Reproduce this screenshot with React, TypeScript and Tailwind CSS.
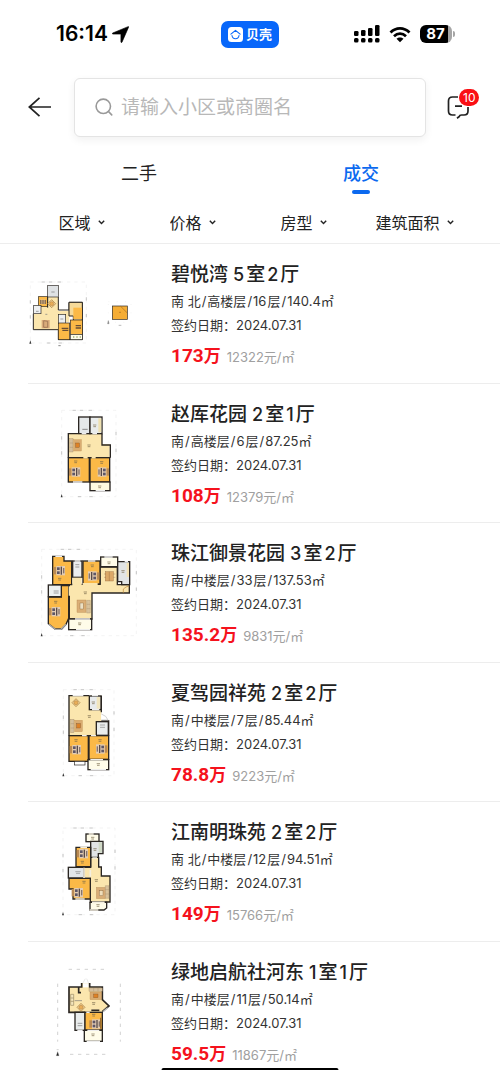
import type { ReactNode } from "react";

type Pos = { x: number; y: number };
type Box = Pos & { w: number; h: number };

const WALL = "#2a2622";
const LIVING = "#fbe6ae";
const BEDROOM = "#fbb947";

function Room({ x, y, w, h, fill, thin }: Box & { fill: string; thin?: boolean }) {
  return <rect x={x} y={y} width={w} height={h} fill={fill} stroke={WALL} strokeWidth={thin ? 2 : 4} />;
}

function Bed({ x, y, flip }: Pos & { flip?: boolean }) {
  return (
    <g transform={`translate(${x} ${y})${flip ? " translate(34 0) scale(-1 1)" : ""}`}>
      <rect x={0} y={3} width={8} height={22} fill="#b98a56" />
      <rect x={8} y={0} width={26} height={28} fill="#e3cdb4" />
      <rect x={10} y={4} width={8} height={8} fill="#5d5666" />
      <rect x={10} y={16} width={8} height={8} fill="#5d5666" />
      <rect x={21} y={2} width={4} height={24} fill="#574a4a" />
      <rect x={28} y={6} width={4} height={16} fill="#85746c" />
    </g>
  );
}

function Sofa({ x, y }: Pos) {
  return (
    <g transform={`translate(${x} ${y})`}>
      <rect width={10} height={40} fill="#d5bf9c" stroke="#9c8360" />
      <path d="M0 13h10M0 26h10" stroke="#9c8360" />
      <rect x={12} y={3} width={23} height={34} fill="#d9ac72" stroke="#b98747" />
      <rect x={18} y={13} width={11} height={13} fill="#dd8228" stroke="#78491f" />
    </g>
  );
}

function Dining({ x, y }: Pos) {
  return (
    <g transform={`translate(${x} ${y})`}>
      <path d="M13 1l12 12-12 12L1 13z" fill="#edcf96" stroke="#a87b3b" strokeWidth={2} />
      <circle cx={13} cy={13} r={6} fill="#e8ad58" stroke="#9c672f" />
    </g>
  );
}

function Mark({ x, y }: Pos) {
  return <path d={`M${x} ${y}h10M${x + 1} ${y + 5}h8`} stroke="#766748" strokeWidth={2} />;
}

/* Dimension lines around a plan, with the compass in the lower left corner */
function Rulers({ x, y, w, h }: Box) {
  return (
    <g fill="none">
      <rect x={x} y={y} width={w} height={h} stroke="#dedede" strokeWidth={1} strokeDasharray="10 12" />
      <path
        d={`M${x + w * 0.2} ${y}h10m12 0h10m16 0h10M${x + w * 0.3} ${y + h}h10m24 0h10M${x} ${y + h * 0.3}v10m0 35v10M${x + w} ${y + h * 0.25}v10m0 40v10`}
        stroke="#aaa"
        strokeWidth={2}
      />
      <path d={`M${x - 3} ${y + h + 2}l3-10 3 10z`} fill="#333" />
    </g>
  );
}

function Plan({ top, children }: { top: number; children: ReactNode }) {
  return (
    <svg viewBox={`24 ${top} 390 360`} className="mt-[9px] h-[120px] w-[130px] shrink-0" role="img" aria-label="户型图">
      {children}
    </svg>
  );
}

const planBiyue = (
  <Plan top={6}>
    <Rulers x={31} y={93} w={168} h={183} />
    <path d="M83 138h32v42h33v34H115v22H40v-48h16v-52z" fill={LIVING} />
    <Room x={83} y={103} w={32} h={35} fill="#dfe2e4" thin />
    <Room x={55} y={137} w={28} h={30} fill={BEDROOM} thin />
    <Room x={41} y={163} w={22} h={25} fill="#eef0f1" thin />
    <path d="M83 137v33M115 138v39h32v-23h40v112H115v-30H40v-48" fill="none" stroke={WALL} strokeWidth={3} />
    <path d="M147 154h40v54h-27v-13h-13z" fill="#f6da99" stroke={WALL} strokeWidth={3} />
    <rect x={160} y={170} width={26} height={34} fill={BEDROOM} />
    <Room x={115} y={190} w={22} h={28} fill="#eceff0" thin />
    <Room x={115} y={216} w={34} h={50} fill={BEDROOM} thin />
    <Room x={151} y={207} w={36} h={43} fill={BEDROOM} thin />
    <Room x={152} y={250} w={35} h={16} fill="#fffce9" thin />
    <path d="M60 147h18v12H60z" fill="#806548" />
    <path d="M64 144v16m5-16v16m5-16v16" stroke="#e3c49c" strokeWidth={2} />
    <Dining x={82} y={145} />
    <rect x={65} y={207} width={24} height={25} fill="#d9ab7a" />
    <path d="M71 209v20h12v-18z" fill="none" stroke="#8d654a" strokeWidth={2} />
    <path d="M125 232h20m-18 6h18m22-14h16m-16 7h16" stroke="#674e35" strokeWidth={4} />
    <path d="M94 123h10M48 181h8M121 204h9M76 190h6" stroke="#777" strokeWidth={2} />
    <path d="M159 258h4m6 0h4m6 0h4" stroke="#75873d" strokeWidth={3} />
    <path d="M115 284h7" stroke="#888" strokeWidth={3} />
    <rect x={265} y={152} width={68} height={62} fill="none" stroke="#ddd" strokeDasharray="3 22" />
    <Room x={277} y={165} w={45} h={40} fill="#f5ad35" thin />
    <path d="M302 166l19 19M297 184h6" fill="none" stroke="#a66b20" strokeWidth={2} />
    <path d="M263 218l2-9 2 9zM296 223h8" fill="#555" stroke="#999" strokeWidth={2} />
  </Plan>
);

const planZhaoshe = (
  <Plan top={-10}>
    <Rulers x={125} y={42} w={163} h={259} />
    <path d="M145 112h101v32h23v42H145z" fill={LIVING} />
    <Room x={176} y={62} w={34} h={50} fill="#e5e8e9" />
    <Room x={210} y={62} w={36} h={50} fill="#e9ecec" />
    <path d="M235 66h9v42h-9z" fill="#efe1b1" />
    <path d="M174 112h-29v72m101-72v34h25v38" fill="none" stroke={WALL} strokeWidth={4} />
    <Room x={145} y={184} w={63} h={73} fill={BEDROOM} />
    <Room x={210} y={184} w={59} h={73} fill={BEDROOM} />
    <Room x={210} y={257} w={60} h={26} fill="#fffbe0" />
    <path d="M185 112h14m18 0h14m-72 145h28m40 26h28" stroke="#eee" strokeWidth={4} />
    <path d="M190 184h13m12 0h12" stroke={LIVING} strokeWidth={5} />
    <Sofa x={149} y={127} />
    <Bed x={147} y={213} />
    <Bed x={233} y={213} flip />
    <Mark x={202} y={146} />
    <Mark x={162} y={194} />
    <Mark x={240} y={196} />
    <Mark x={219} y={86} />
    <Mark x={234} y={269} />
    <path d="M187 99h16" stroke="#888" strokeWidth={3} />
  </Plan>
);

const planZhujiang = (
  <Plan top={3}>
    <Rulers x={65} y={55} w={284} h={259} />
    <path d="M148 160h92V108h52v53h36v25H216v78h-68z" fill={LIVING} stroke={WALL} strokeWidth={4} />
    <path d="M98 76h34v14h23v71H98z" fill={BEDROOM} stroke={WALL} strokeWidth={4} />
    <Room x={158} y={90} w={28} h={49} fill="#eceeef" />
    <rect x={157} y={140} width={28} height={23} fill={LIVING} />
    <Room x={189} y={90} w={51} h={69} fill={BEDROOM} />
    <Room x={242} y={78} w={51} h={29} fill="#fffce9" />
    <path d="M293 92h36v69h-24v-9h-12z" fill="#e1e4e5" stroke={WALL} strokeWidth={4} />
    <path d="M320 96h7v42h-7z" fill="#f3e2b6" />
    <path d="M124 164h22v98l-8 18-13 14h-20l-20-16v-80h39z" fill={BEDROOM} stroke={WALL} strokeWidth={4} />
    <Room x={85} y={162} w={39} h={35} fill="#edf0f0" />
    <Room x={146} y={264} w={69} h={32} fill="#fffce9" />
    <path d="M86 280l20 15h17l15-15" fill="none" stroke="#aaa" strokeWidth={4} />
    <path d="M106 76h20m38 14h17m23 0h22m27-12h25m36 14h10m-156 204h42m-45-32h45" stroke="#eee" strokeWidth={4} />
    <path d="M149 166v28M188 159h45" stroke={LIVING} strokeWidth={6} />
    <path d="M310 186v-12q8-8 18-9" fill="none" stroke="#b98539" strokeWidth={2} />
    <Bed x={101} y={105} />
    <Bed x={204} y={121} flip />
    <Bed x={87} y={228} />
    <g fill="#dca867" stroke="#895a32">
      <rect x={256} y={122} width={24} height={28} />
      <path d="M268 122v28M252 129h6m-6 10h6m22-10h6m-6 10h6" />
    </g>
    <rect x={171} y={207} width={27} height={37} fill="#dbaf76" stroke="#aa7b48" />
    <rect x={180} y={216} width={10} height={18} fill="#ece0c4" stroke="#76542c" />
    <path d="M200 208h11v38h-11zM200 220h11m-11 13h11" fill="#d9c29b" stroke="#9c8360" />
    <Mark x={114} y={142} />
    <Mark x={212} y={102} />
    <Mark x={262} y={93} />
    <Mark x={102} y={211} />
    <Mark x={191} y={183} />
    <Mark x={304} y={119} />
    <Mark x={174} y={276} />
    <path d="M166 101h12m-12 7h12M101 180h15m-15 6h15" stroke="#777" strokeWidth={2} />
  </Plan>
);

const planXiajia = (
  <Plan top={2}>
    <Rulers x={130} y={55} w={152} h={258} />
    <path d="M147 73h97v120h-97z" fill={LIVING} />
    <Room x={208} y={74} w={35} h={41} fill="#e8ebed" />
    <path d="M230 77h11v35h-11z" fill="#f1e5be" />
    <Room x={229} y={151} w={36} h={41} fill="#eaeded" />
    <path d="M207 73h-60v120m97-120v50m0 26h22v44" fill="none" stroke={WALL} strokeWidth={4} />
    <path d="M244 128q16 5 20 18h-20" fill="#fff" stroke="#bbb" strokeWidth={2} />
    <Room x={147} y={193} w={58} h={77} fill={BEDROOM} />
    <Room x={207} y={193} w={59} h={71} fill={BEDROOM} />
    <Room x={163} y={270} w={32} h={11} fill="#fff" thin />
    <Room x={204} y={265} w={62} h={30} fill="#fffce9" />
    <path d="M158 73h32m26 0h18m-18 42h22m-26 180h46m-47-30h38M186 193h14m13 0h15" stroke="#eee" strokeWidth={4} />
    <Dining x={155} y={81} />
    <Sofa x={152} y={144} />
    <Bed x={149} y={221} />
    <Bed x={228} y={219} flip />
    <Mark x={203} y={133} />
    <Mark x={163} y={205} />
    <Mark x={235} y={205} />
    <Mark x={215} y={92} />
    <Mark x={230} y={277} />
    <path d="M240 161h15m-15 7h15" stroke="#888" strokeWidth={2} />
  </Plan>
);

const planJiangnan = (
  <Plan top={0}>
    <Rulers x={129} y={51} w={156} h={260} />
    <path d="M212 139h24v29h8v27h26v78h-59v-71h-20v-33h21z" fill={LIVING} stroke={WALL} strokeWidth={4} />
    <Room x={198} y={69} w={39} h={23} fill="#fffce9" />
    <path d="M212 91h37v37h-14v11h-23z" fill="#e0e3e5" stroke={WALL} strokeWidth={4} />
    <path d="M168 109h44v58h-44z" fill={BEDROOM} stroke={WALL} strokeWidth={4} />
    <Room x={145} y={169} w={46} h={32} fill="#e3e6e8" />
    <path d="M147 202h64v62h-52v-30h-12z" fill={BEDROOM} stroke={WALL} strokeWidth={4} />
    <path d="M210 274h50v17l-8 6h-42z" fill="#fffce9" stroke={WALL} strokeWidth={4} />
    <path d="M192 170v31M217 141h14M211 177v20m-30-88h20m-35 155h28m15 33h26m-29-228h15M216 274h38" stroke="#f3eee0" strokeWidth={5} />
    <path d="M236 94h10v31h-10z" fill="#d0d9c6" />
    <Bed x={170} y={114} />
    <Bed x={155} y={231} />
    <rect x={229} y={229} width={28} height={34} fill="#d9ad77" stroke="#b18a59" />
    <rect x={238} y={239} width={11} height={15} fill="#f0debb" stroke="#745432" />
    <path d="M256 224h11v38h-11zM256 236h11m-11 13h11" fill="#d9c29b" stroke="#9c8360" />
    <Mark x={182} y={151} />
    <Mark x={187} y={211} />
    <Mark x={224} y={206} />
    <Mark x={220} y={113} />
    <Mark x={213} y={79} />
    <Mark x={229} y={281} />
    <path d="M166 182h16m-14 5h12" stroke="#888" strokeWidth={2} />
  </Plan>
);

const planLvdi = (
  <Plan top={-2}>
    <g fill="none" stroke="#bbb" strokeWidth={2} strokeDasharray="10 14">
      <path d="M146 53h120M150 308h114M113 96v174M301 96v174" />
    </g>
    <path d="M109 312l4-12 4 12zM110 294h6" fill="#222" stroke="#777" />
    <path d="M147 106h38V95h23v11h39v38l20 20-20 17v55h-52v-54h-48z" fill={LIVING} />
    <path d="M189 95h17v12h-17z" fill="#fff" />
    <path d="M188 95l8-14m10 14l-6-14" stroke="#bbb" />
    <path d="M185 94v12h-38v76h48M209 94v12h38v38l20 19-20 17M176 108v15h7" fill="none" stroke={WALL} strokeWidth={5} />
    <path d="M249 180l14-12" stroke="#bbb" strokeWidth={4} />
    <Room x={165} y={182} w={30} h={54} fill="#e9ecec" />
    <Room x={195} y={182} w={52} h={53} fill={BEDROOM} />
    <Room x={193} y={236} w={54} h={33} fill="#fffce9" />
    <path d="M200 269h40M202 236h36M172 236h16M199 182h10" stroke="#eee" strokeWidth={4} />
    <g transform="translate(247 109) rotate(90)">
      <Sofa x={0} y={0} />
    </g>
    <Dining x={170} y={154} />
    <path d="M152 128h9v33h-9zM152 139h9m-9 10h9" fill="#f4e6bd" stroke="#998963" strokeWidth={2} />
    <path d="M214 176h24" stroke={WALL} strokeWidth={5} />
    <Bed x={208} y={203} />
    <path d="M242 198v33" stroke="#9c6e2e" strokeWidth={4} />
    <Mark x={216} y={153} />
    <Mark x={216} y={188} />
    <Mark x={214} y={247} />
    <path d="M164 147h22M173 215h14m-14 7h14" stroke="#777" strokeWidth={2} />
  </Plan>
);

const listings = [
  { name: "碧悦湾", rooms: "5", halls: "2", facing: "南 北", level: "高楼层", floors: "16", area: "140.4", price: "173", unit: "12322", plan: planBiyue },
  { name: "赵厍花园", rooms: "2", halls: "1", facing: "南", level: "高楼层", floors: "6", area: "87.25", price: "108", unit: "12379", plan: planZhaoshe },
  { name: "珠江御景花园", rooms: "3", halls: "2", facing: "南", level: "中楼层", floors: "33", area: "137.53", price: "135.2", unit: "9831", plan: planZhujiang },
  { name: "夏驾园祥苑", rooms: "2", halls: "2", facing: "南", level: "中楼层", floors: "7", area: "85.44", price: "78.8", unit: "9223", plan: planXiajia },
  { name: "江南明珠苑", rooms: "2", halls: "2", facing: "南 北", level: "中楼层", floors: "12", area: "94.51", price: "149", unit: "15766", plan: planJiangnan },
  { name: "绿地启航社河东", rooms: "1", halls: "1", facing: "南", level: "中楼层", floors: "11", area: "50.14", price: "59.5", unit: "11867", plan: planLvdi },
];

const filters = ["区域", "价格", "房型", "建筑面积"];

function StatusBar() {
  return (
    <div className="grid h-[68px] grid-cols-3 items-center px-[45px] text-black">
      <div className="flex items-center gap-1 pl-[11px]">
        <span className="text-[21px] leading-6 font-semibold">16:14</span>
        <svg viewBox="0 0 16 16" className="size-[17px]" aria-hidden="true">
          <path
            d="M15.200.600c.400-.200.600.100.400.500L9.400 15.200c-.300.600-1 .500-1-.200V8.200c0-.400-.200-.600-.600-.600H.900c-.700 0-.800-.700-.200-1z"
            fill="currentColor"
            stroke="currentColor"
            strokeWidth="0.600"
          />
        </svg>
      </div>
      <div className="flex justify-center">
        <div className="flex h-[27px] w-[58px] shrink-0 items-center justify-center gap-[3px] rounded-[7px] bg-[#0867fa] text-white">
          <svg viewBox="0 0 15 15" className="size-[15px]" aria-hidden="true">
            <rect width="15" height="15" rx="3.500" fill="#fff" />
            <path
              d="M2.900 7.200 7.500 3.300l4.600 3.900M4 8.500c.500 4.300 6.500 4.300 7 0"
              fill="none"
              stroke="#0867fa"
              strokeWidth="1.100"
              strokeLinecap="round"
              strokeLinejoin="round"
            />
          </svg>
          <span className="text-[13px] leading-4 font-bold">贝壳</span>
        </div>
      </div>
      <div className="flex items-center justify-end gap-[9px]">
        <svg viewBox="0 0 26 18" className="h-[18px] w-[26px]" fill="currentColor" aria-label="信号">
          <rect x="0" y="6" width="4.500" height="5" rx="1.300" />
          <rect x="7" y="5" width="4.500" height="6" rx="1.300" />
          <rect x="14" y="3" width="4.500" height="8" rx="1.300" />
          <rect x="21" y="0" width="4.500" height="11" rx="1.300" />
          <rect x="0" y="13" width="4.500" height="4.500" rx="1.500" />
          <rect x="7" y="13" width="4.500" height="4.500" rx="1.500" />
          <rect x="14" y="13" width="4.500" height="4.500" rx="1.500" />
          <rect x="21" y="13" width="4.500" height="4.500" rx="1.500" />
        </svg>
        <svg viewBox="0 0 22 17" className="h-[17px] w-[22px]" aria-label="无线网络">
          <path d="M1.500 6.400C7 .900 15 .900 20.500 6.400" fill="none" stroke="currentColor" strokeWidth="2.800" />
          <path d="M5 10.200c3.500-3.400 8.500-3.400 12 0" fill="none" stroke="currentColor" strokeWidth="2.700" />
          <path d="M7.500 12.800c2-1.900 5-1.900 7 0L11 16.300z" fill="currentColor" />
        </svg>
        <div className="flex items-center gap-px">
          <div className="flex h-[18px] w-8 items-center justify-center rounded-md bg-linear-to-r from-black from-88% to-[#a5a5a5] to-88% pr-px text-[15px] leading-[18px] font-bold text-white">
            87
          </div>
          <div className="h-1.5 w-0.5 rounded-r-full bg-[#a5a5a5]" />
        </div>
      </div>
    </div>
  );
}

function SearchRow() {
  return (
    <div className="flex h-[78px] items-center px-7">
      <button type="button" aria-label="返回" className="text-[#222]">
        <svg viewBox="0 0 24 20" className="h-5 w-6" fill="none" stroke="currentColor" strokeWidth="1.700">
          <path d="M11.500.800 1.300 10l10.200 9.200M1.500 10h21.500" />
        </svg>
      </button>
      <label className="mr-[21px] ml-[22px] flex h-[59px] min-w-0 flex-1 items-center gap-2 rounded-md border border-[#e4e4e4] bg-white pl-5 shadow-[0_3px_8px_rgba(0,0,0,0.06)]">
        <svg viewBox="0 0 18 18" className="size-[18px] shrink-0" fill="none" stroke="#999" strokeWidth="1.600" strokeLinecap="round" aria-hidden="true">
          <circle cx="8.300" cy="8.300" r="7.200" />
          <path d="m13.500 13.500 3.200 3.400" />
        </svg>
        <input
          type="search"
          aria-label="搜索"
          placeholder="请输入小区或商圈名"
          className="h-full w-full min-w-0 bg-transparent text-[19px] outline-none placeholder:text-[#b8b8b8]"
        />
      </label>
      <button type="button" aria-label="消息 10" className="relative text-[#222]">
        <svg viewBox="0 0 25 24" className="h-6 w-[25px]" fill="none" stroke="currentColor" strokeWidth="1.700">
          <path d="M11 2H5.500Q1.500 2 1.500 6v10Q1.500 20 5.500 20h3M21 12v4q0 4-4 4h-2.500q-2 0-2.200 1.500l-2.300 1.700M8 11.200h7" />
        </svg>
        <span className="absolute -top-1.5 left-3 rounded-full bg-[#fa0f14] px-1 text-[12px] leading-[17px] text-white">10</span>
      </button>
    </div>
  );
}

function Slash() {
  return <span className="mx-px">/</span>;
}

function Listing({ item }: { item: (typeof listings)[number] }) {
  return (
    <li className="flex gap-[13px] border-b border-[#ededed] odd:pb-px last:border-0 last:pb-0">
      {item.plan}
      <div className="min-w-0 pt-4 pb-3 text-[#222]">
        <h2 className="h-[29px] text-[19px] leading-[30px] font-medium">
          {item.name} <span className="mr-0.5 text-[18px]">{item.rooms}</span>室
          <span className="mx-0.5 text-[18px]">{item.halls}</span>厅
        </h2>
        <p className="h-6 text-[13px] leading-6 text-[#333]">
          {item.facing}
          <Slash />
          {item.level}
          <Slash />
          <span className="mr-px">{item.floors}</span>层
          <Slash />
          {item.area}㎡
        </p>
        <p className="h-6 text-[13px] leading-6 text-[#333]">签约日期：2024.07.31</p>
        <p className="mt-[5px] flex h-7 items-baseline gap-1.5 leading-7">
          <span className="font-[Roboto,'Noto_Sans_CJK_SC',sans-serif] text-[19px] font-bold text-[#f5121d]">
            {item.price}
            <span className="text-[17px]">万</span>
          </span>
          <span className="text-[13px] text-[#a0a0a0]">{item.unit}元/㎡</span>
        </p>
      </div>
    </li>
  );
}

export default function App() {
  return (
    <div className="bg-white font-[Inter,'Noto_Sans_CJK_SC',sans-serif]">
      <StatusBar />
      <SearchRow />
      <nav className="grid h-[54px] grid-cols-2 px-7 text-[18px] leading-7">
        <button type="button" className="pt-0.5 text-[#222]">二手</button>
        <button type="button" aria-current="page" className="relative pt-0.5 font-medium text-[#0b69ef]">
          成交
          <span className="absolute bottom-1.5 left-1/2 h-1 w-[18px] -translate-x-1/2 rounded-full bg-[#0b69ef]" />
        </button>
      </nav>
      <div className="border-b border-[#ededed]">
        <div className="grid h-[43px] grid-cols-4 items-center px-7 pt-0.5">
          {filters.map((name) => (
            <label key={name} className="flex items-center justify-center gap-1.5 pr-1 text-[16px] leading-6 text-[#222]">
              <select aria-label={name} className="appearance-none bg-transparent">
                <option>{name}</option>
              </select>
              <svg viewBox="0 0 7 5" className="h-[5px] w-[7px] shrink-0" fill="none" stroke="currentColor" strokeWidth="1.400" aria-hidden="true">
                <path d="m.800.800 2.700 2.700L6.200.800" />
              </svg>
            </label>
          ))}
        </div>
      </div>
      <ul className="pl-7">
        {listings.map((item) => (
          <Listing key={item.name} item={item} />
        ))}
      </ul>
      {/* Home indicator */}
      <div className="fixed bottom-0 left-1/2 h-0.5 w-[177px] -translate-x-1/2 rounded-t-full bg-black" />
    </div>
  );
}
